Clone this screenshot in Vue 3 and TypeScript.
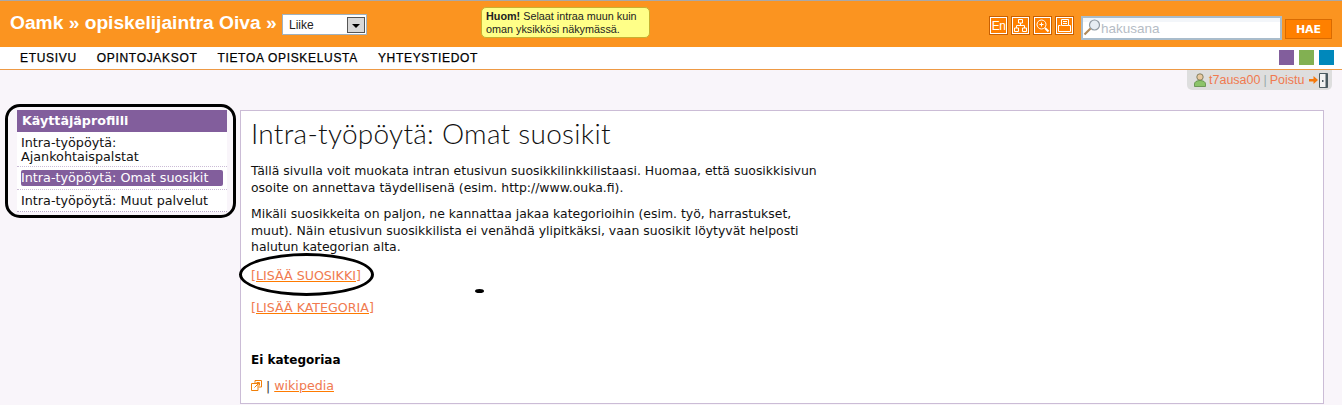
<script setup lang="ts">
const navItems: string[] = ['ETUSIVU', 'OPINTOJAKSOT', 'TIETOA OPISKELUSTA', 'YHTEYSTIEDOT']
const swatches: string[] = ['#825e9c', '#82b052', '#0088bb']
</script>

<template>
  <div class="page">
    <header class="top">
      <div class="brand">Oamk » opiskelijaintra Oiva »</div>
      <div class="select">
        <span>Liike</span>
        <span class="select-btn"><i></i></span>
      </div>
      <div class="notice"><b>Huom!</b> Selaat intraa muun kuin<br />oman yksikkösi näkymässä.</div>
      <div class="tools">
        <span class="tool en">En</span>
        <span class="tool">
          <svg width="15" height="15" viewBox="0 0 15 15" fill="none" stroke="#fff"><path d="M5.500 1.500h4v3.500h-4zM1.500 10h4v3.500h-4zM9.500 10h4v3.500h-4zM7.500 5v2.500M3.500 10V7.500h8V10" /></svg>
        </span>
        <span class="tool">
          <svg width="15" height="15" viewBox="0 0 15 15" fill="none" stroke="#fff"><circle cx="6.500" cy="6.500" r="4.500" /><path d="M4.500 6.500h4M6.500 4.500v4" /><path d="M10 10l3.500 3.500" stroke-width="2" /></svg>
        </span>
        <span class="tool">
          <svg width="15" height="15" viewBox="0 0 15 15" fill="none" stroke="#fff"><path d="M4.500 1.500h7v6h-7zM6 3.500h4M6 5.500h4M3.500 7.500H1.500v6h12v-6h-2" /></svg>
        </span>
      </div>
      <div class="search">
        <svg class="lens" width="18" height="19" viewBox="0 0 18 19" fill="none"><circle cx="11.500" cy="7" r="5" fill="#e6edf3" stroke="#8f9aa3" stroke-width="1.200" /><path d="M7.500 10.500L1.500 16.500" stroke="#b08a5a" stroke-width="2.200" /></svg>
        <span>hakusana</span>
      </div>
      <button class="go" type="button">HAE</button>
    </header>

    <nav class="nav">
      <span v-for="item in navItems" :key="item">{{ item }}</span>
      <div class="swatches">
        <span v-for="c in swatches" :key="c" :style="{ background: c }"></span>
      </div>
    </nav>

    <div class="userbar-row">
      <div class="userbar">
        <svg width="12" height="14" viewBox="0 0 12 14"><circle cx="6" cy="4" r="3.200" fill="#e8c9a0" stroke="#6b6b4a" stroke-width=".8" /><path d="M.5 13.500V11c0-2 2-3.500 5.500-3.500s5.500 1.500 5.500 3.500v2.500z" fill="#8cc46a" stroke="#5b8a45" stroke-width=".8" /></svg>
        <span class="link">t7ausa00</span>
        <span class="sep">|</span>
        <span class="link">Poistu</span>
        <svg class="door" width="19" height="15" viewBox="0 0 19 15"><path d="M0 6h4.500V3L9 7l-4.500 4V8.500H0z" fill="#f5780a" /><path d="M10.500.5h8v14h-8z" fill="#f2f2f2" stroke="#4a5a60" /><path d="M16.500.5h2v14h-2z" fill="#4a5a60" /><path d="M13 7h1.500v2H13z" fill="#4a5a60" /></svg>
      </div>
    </div>

    <main class="layout">
      <aside class="side">
        <div class="side-box">
          <h3>Käyttäjäprofiili</h3>
          <div class="item">Intra-työpöytä:<br />Ajankohtaispalstat</div>
          <div class="item slim"><span class="active">Intra-työpöytä: Omat suosikit</span></div>
          <div class="item last">Intra-työpöytä: Muut palvelut</div>
        </div>
        <div class="mark-rect"></div>
      </aside>

      <section class="content">
        <h1>Intra-työpöytä: Omat suosikit</h1>
        <p>Tällä sivulla voit muokata intran etusivun suosikkilinkkilistaasi. Huomaa, että suosikkisivun<br />osoite on annettava täydellisenä (esim. http://www.ouka.fi).</p>
        <p>Mikäli suosikkeita on paljon, ne kannattaa jakaa kategorioihin (esim. työ, harrastukset,<br />muut). Näin etusivun suosikkilista ei venähdä ylipitkäksi, vaan suosikit löytyvät helposti<br />halutun kategorian alta.</p>
        <p class="action first"><a>[LISÄÄ SUOSIKKI]</a><span class="mark-ellipse"></span><span class="mark-dot"></span></p>
        <p class="action"><a>[LISÄÄ KATEGORIA]</a></p>
        <h4>Ei kategoriaa</h4>
        <p class="fav">
          <svg width="11" height="11" viewBox="0 0 11 11" fill="none" stroke="#f07f09"><path d="M.5 3.500h6.500v7H.5z" /><path d="M4 3V.5h6.500V7H7.500" /><path d="M3.500 7.500l4.500-4.500M5.500 2.500H8.500v3" /></svg>
          <span class="pipe">|</span>
          <a>wikipedia</a>
        </p>
      </section>
    </main>
  </div>
</template>

<style>
html, body { margin: 0; background: #f9f5fa; }
</style>

<style scoped>
.page {
  width: 1342px;
  height: 405px;
  overflow: hidden;
  box-sizing: border-box;
  background: #f9f5fa;
  font-family: "DejaVu Sans", Verdana, sans-serif;
  font-size: 12.450px;
  color: #111;
}
.top {
  height: 47px;
  box-sizing: border-box;
  border-top: 1px solid #a8a8a8;
  background: #fb9420;
  display: flex;
  align-items: flex-start;
  font-family: "Liberation Sans", Arial, sans-serif;
}
.brand {
  margin: 11px 0 0 10px;
  width: 272px;
  font-size: 19.200px;
  line-height: 22px;
  font-weight: 700;
  color: #fff;
  white-space: nowrap;
}
.select {
  margin-top: 13px;
  width: 85px;
  height: 21px;
  box-sizing: border-box;
  border: 1px solid #9fb2c0;
  background: #fff;
  display: flex;
  align-items: center;
  justify-content: space-between;
  padding: 0 1px 0 6px;
  font-size: 12px;
  color: #222;
}
.select-btn {
  width: 18px;
  height: 16px;
  box-sizing: border-box;
  border: 1px solid #555;
  background: #d8d8d8;
  display: flex;
  align-items: center;
  justify-content: center;
}
.select-btn i {
  border-left: 4px solid transparent;
  border-right: 4px solid transparent;
  border-top: 4px solid #000;
  margin-top: 2px;
}
.notice {
  margin: 6px 0 0 114px;
  width: 169px;
  height: 31px;
  box-sizing: border-box;
  padding: 2px 4px;
  border: 1px solid #c8b030;
  border-radius: 5px;
  background: #ffff88;
  font-size: 10.800px;
  line-height: 13px;
  color: #222;
  white-space: nowrap;
}
.tools {
  margin: 15px 0 0 339px;
  display: flex;
  gap: 3px;
}
.tool {
  width: 19px;
  height: 19px;
  box-sizing: border-box;
  background: #ff8000;
  border: 1px solid #c85f00;
  outline: 1px solid #fff;
  outline-offset: -2px;
  display: flex;
  align-items: center;
  justify-content: center;
}
.tool.en {
  color: #fff;
  font-size: 12px;
  letter-spacing: -.5px;
}
.search {
  margin: 15px 0 0 7px;
  width: 201px;
  height: 24px;
  box-sizing: border-box;
  border: 2px solid #a9bccb;
  background: linear-gradient(#f3f6fa 0 4px, #fff 4px);
  display: flex;
  align-items: center;
  font-size: 13.500px;
  color: #b5bcc5;
}
.lens { flex: none; margin-top: -2px; }
.go {
  margin: 18px 0 0 3px;
  width: 47px;
  height: 20px;
  box-sizing: border-box;
  padding: 0;
  border: 1px solid #d96a00;
  background: #ff8000;
  color: #fff;
  font: 700 11px "DejaVu Sans", sans-serif;
}
.nav {
  height: 23px;
  box-sizing: border-box;
  padding-left: 20px;
  background: #fff;
  border-bottom: 1px solid #ee9a45;
  display: flex;
  align-items: center;
  gap: 20px;
  font-family: "Liberation Sans", Arial, sans-serif;
  font-size: 12px;
  letter-spacing: .680px;
  color: #000;
  -webkit-text-stroke: .25px #000;
}
.swatches {
  margin-left: auto;
  margin-right: 8px;
  display: flex;
  gap: 5px;
  padding-bottom: 1px;
}
.swatches span { width: 15px; height: 15px; }
.userbar-row {
  display: flex;
  justify-content: flex-end;
  padding-right: 10px;
  height: 20px;
  margin-bottom: 20px;
}
.userbar {
  width: 145px;
  height: 20px;
  box-sizing: border-box;
  background: #dedede;
  border-radius: 0 0 5px 5px;
  display: flex;
  align-items: center;
  gap: 3px;
  padding-left: 7px;
  font-family: "Liberation Sans", Arial, sans-serif;
  font-size: 12.500px;
}
.userbar .link { color: #f07a50; }
.userbar .sep { color: #9aa; }
.door { flex: none; margin-left: 2px; }
.layout {
  display: flex;
  align-items: flex-start;
}
.side {
  position: relative;
  width: 240px;
  flex: none;
  padding: 0 0 0 17px;
  box-sizing: border-box;
  font-size: 12.750px;
}
.side-box {
  width: 210px;
  background: #fff;
  border-bottom: 1px dotted #b9a6c8;
}
.side-box h3 {
  margin: 0;
  height: 22px;
  line-height: 22px;
  padding-left: 5px;
  background: #825e9c;
  color: #fff;
  font-size: 12.700px;
}
.item {
  padding: 4px 4px 2px;
  line-height: 14px;
  border-bottom: 1px dotted #cbbcd6;
}
.item.slim { padding: 3px 4px; }
.item.last {
  border-bottom: 0;
  padding: 4px 4px 3px;
}
.active {
  display: block;
  line-height: 16px;
  background: #825e9c;
  color: #fff;
  border-radius: 2px;
  white-space: nowrap;
}
.mark-rect {
  position: absolute;
  left: 5px;
  top: -6px;
  width: 231px;
  height: 114px;
  box-sizing: border-box;
  border: 3px solid #000;
  border-radius: 15px;
  pointer-events: none;
}
.content {
  width: 1084px;
  height: 294px;
  box-sizing: border-box;
  background: #fff;
  border: 1px solid #cbbcd6;
  padding: 6px 10px 0;
}
h1 {
  margin: 0 0 14px;
  font: 300 28px/32px Lato, "Liberation Sans", sans-serif;
  letter-spacing: .28px;
  color: #111;
}
p {
  margin: 0 0 10px;
  line-height: 16.500px;
}
.action {
  position: relative;
  margin-bottom: 15.500px;
  font-size: 12.650px;
}
.action.first { margin-top: 12.500px; }
.action a, .fav a {
  color: #f07a50;
  text-decoration: underline;
  text-decoration-color: #ff7a00;
}
.mark-ellipse {
  position: absolute;
  left: -12px;
  top: -15px;
  width: 135px;
  height: 43px;
  box-sizing: border-box;
  border: 3px solid #000;
  border-radius: 50%;
}
.mark-dot {
  position: absolute;
  left: 224px;
  top: 21px;
  width: 9px;
  height: 4px;
  border-radius: 50%;
  background: #000;
}
h4 {
  margin: 36px 0 10px;
  font-size: 12px;
  line-height: 15px;
  color: #000;
}
.fav {
  display: flex;
  align-items: center;
  gap: 4px;
}
.fav a { font-size: 12.650px; }
.pipe { color: #333; }
</style>
